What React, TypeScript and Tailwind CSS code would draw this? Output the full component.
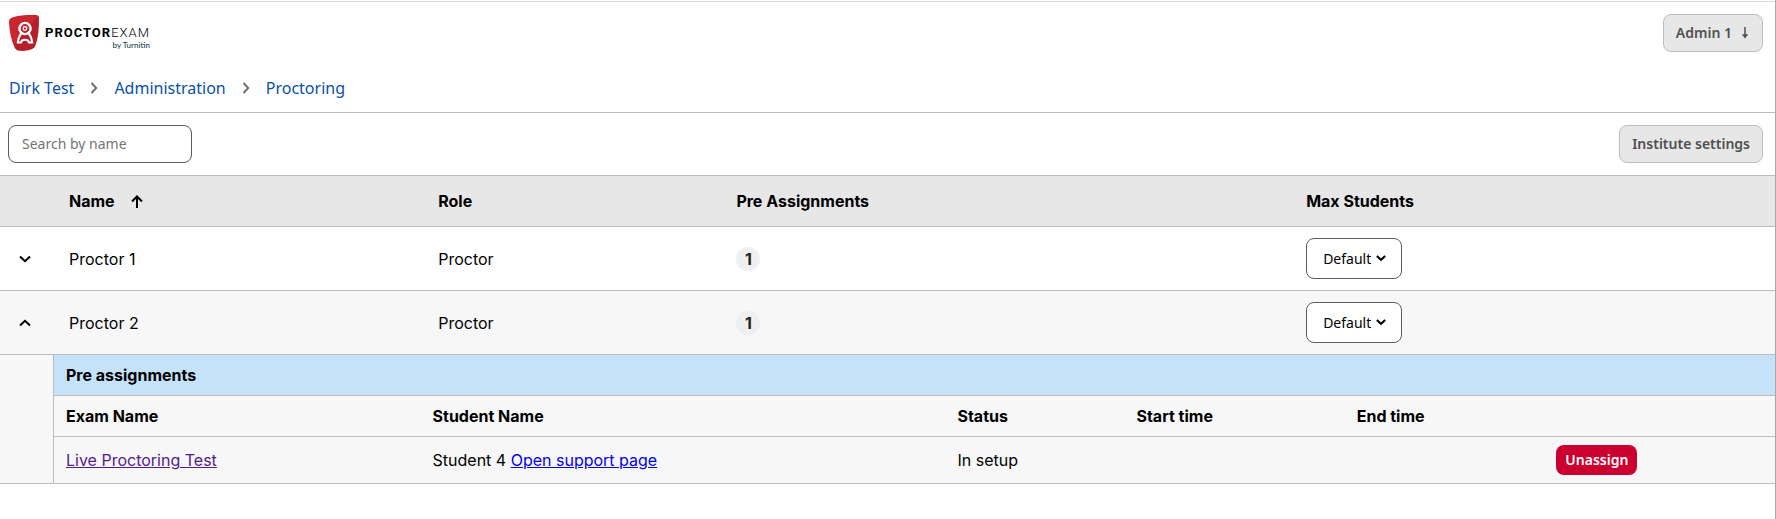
import clsx from "clsx";

type ChevronProps = {
  className?: string;
};

type Proctor = {
  name: string;
  role: string;
  preAssignments: number;
  expanded: boolean;
};

const breadcrumbs = ["Dirk Test", "Administration", "Proctoring"];

const proctors: Proctor[] = [
  { name: "Proctor 1", role: "Proctor", preAssignments: 1, expanded: false },
  { name: "Proctor 2", role: "Proctor", preAssignments: 1, expanded: true },
];

function ChevronDown({ className }: ChevronProps) {
  return (
    <svg
      viewBox="0 0 12 8"
      fill="none"
      stroke="currentColor"
      strokeWidth="2"
      className={className}
      aria-hidden="true"
    >
      <path d="M1 1.5 6 6.2 11 1.5" />
    </svg>
  );
}

function Logo() {
  return (
    <a href="#" aria-label="ProctorExam by Turnitin" className="flex items-center gap-1.5">
      <svg viewBox="0 0 30 36" className="h-9 w-[30px]" aria-hidden="true">
        <defs>
          <linearGradient id="shield" x1="0" y1="0" x2="1" y2="1">
            <stop offset="0.5" stopColor="#ca2630" />
            <stop offset="0.5" stopColor="#b51f29" />
          </linearGradient>
        </defs>
        <path
          d="M4 2.2C11 .2 19-.4 27 .1c2 .1 3 1.2 3 3.2C30 13 29.5 21 27 29c-1 3-2 4.500-4.500 5.300-4 1.500-8 1.900-12 1.500-2.500-.3-4-1.300-5-3.600C2 25 .4 16 0 7c0-2.800 1.200-4 4-4.800Z"
          fill="url(#shield)"
        />
        <g fill="none" stroke="#fff">
          <circle cx="16" cy="13.5" r="5.6" strokeWidth="2.4" />
          <circle cx="16" cy="13.5" r="1.8" strokeWidth="1.3" />
          <path
            d="M12.2 18.500C10.500 20.500 9.300 24 8.800 27.500h3.200c.8-3.600 7.200-3.600 8 0h3.200c-.5-3.500-1.700-7-3.400-9"
            strokeWidth="2"
          />
        </g>
      </svg>
      <span className="flex flex-col items-end pt-3 leading-none text-black">
        <span className="font-['Roboto',sans-serif] text-[13px] leading-3 font-light tracking-[1px]">
          <b className="font-bold">PROCTOR</b>EXAM
        </span>
        <span className="font-['Lato',sans-serif] text-[8px] leading-3 font-medium text-[#17414d]">
          by Turnitin
        </span>
      </span>
    </a>
  );
}

function Header() {
  return (
    <header className="border-y border-t-[#d9d9d9] border-b-[#bdbdbd] py-3">
      <div className="flex items-center justify-between pr-3 pl-[9px]">
        <Logo />
        <button
          type="button"
          className="flex h-[38px] items-center gap-2 rounded-lg border border-[#bdbdbd] bg-[#e7e7e7] px-3 text-sm font-semibold text-[#505050]"
        >
          Admin 1
          <svg viewBox="1 0 10 12" className="h-3 w-[10px]" aria-hidden="true">
            <path d="M6 0v8" stroke="currentColor" strokeWidth="1.5" />
            <path d="M2.8 7.300h6.400L6 11.500Z" fill="currentColor" />
          </svg>
        </button>
      </div>
      <nav aria-label="Breadcrumb" className="mt-6 pl-[9px]">
        <ol className="flex gap-4">
          {breadcrumbs.map((crumb, i) => (
            <li key={crumb} className="flex items-center gap-4">
              {i > 0 && (
                <ChevronDown className="-mx-0.5 h-2 w-3 -rotate-90 text-[#707070]" />
              )}
              <a href="#" className="text-[#0b51a8]">
                {crumb}
              </a>
            </li>
          ))}
        </ol>
      </nav>
    </header>
  );
}

function Toolbar() {
  return (
    <div className="flex items-center justify-between border-b border-[#bdbdbd] py-3 pr-3 pl-2">
      <input
        type="search"
        aria-label="Search by name"
        placeholder="Search by name"
        className="h-[38px] w-[184px] rounded-lg border border-[#5c5c5c] bg-white px-[13px] pb-0.5 text-sm placeholder:text-[#757575]"
      />
      <button
        type="button"
        className="h-[38px] rounded-lg border border-[#bdbdbd] bg-[#e7e7e7] px-3 text-sm font-semibold text-[#505050]"
      >
        Institute settings
      </button>
    </div>
  );
}

function MaxStudentsSelect({ name }: { name: string }) {
  return (
    <div className="relative h-[41px] w-24">
      <select
        aria-label={`Max students for ${name}`}
        className="size-full appearance-none rounded-lg border border-[#5c5c5c] bg-white pl-4 font-['Noto_Sans',sans-serif] text-sm text-black"
      >
        <option>Default</option>
      </select>
      <ChevronDown className="pointer-events-none absolute top-4 right-4 h-2 w-[10px] stroke-[2.5]" />
    </div>
  );
}

function ProctorRow({ name, role, preAssignments, expanded }: Proctor) {
  return (
    <tr
      className={clsx(
        "h-16 [&>td]:border-b [&>td]:border-[#bdbdbd]",
        expanded && "bg-[#f7f7f7]"
      )}
    >
      <td>
        <button
          type="button"
          aria-label={`Toggle pre assignments of ${name}`}
          aria-expanded={expanded}
          className="flex w-full justify-center pr-1"
        >
          <ChevronDown className={clsx("h-2 w-3", expanded && "rotate-180")} />
        </button>
      </td>
      <td className="px-4">{name}</td>
      <td className="px-4">{role}</td>
      <td className="px-4">
        <span className="flex size-6 items-center justify-center rounded-full bg-[#efefef] font-bold text-[#222]">
          {preAssignments}
        </span>
      </td>
      <td className="px-4">
        <MaxStudentsSelect name={name} />
      </td>
    </tr>
  );
}

function PreAssignments() {
  return (
    <table className="w-full table-fixed border-separate border-spacing-0 text-left">
      <caption className="h-[41px] border-b border-[#bdbdbd] bg-[#c6e2f8] px-3 text-left leading-10 font-bold">
        Pre assignments
      </caption>
      <thead>
        <tr className="h-[41px] [&>*]:border-b [&>*]:border-[#bdbdbd]">
          <th className="w-[21.3%] px-3">Exam Name</th>
          <th className="w-[30.5%] px-3">Student Name</th>
          <th className="w-[10.4%] px-3">Status</th>
          <th className="w-[12.8%] px-3">Start time</th>
          <th className="w-[11.6%] px-3">End time</th>
          <td className="px-3" />
        </tr>
      </thead>
      <tbody>
        <tr className="h-[46px]">
          <td className="px-3">
            <a href="#" className="text-[#551a8b] underline">
              Live Proctoring Test
            </a>
          </td>
          <td className="px-3">
            Student 4{" "}
            <a href="#" className="text-[#0000ee] underline">
              Open support page
            </a>
          </td>
          <td className="px-3">In setup</td>
          <td className="px-3" />
          <td className="px-3" />
          <td className="px-3">
            <button
              type="button"
              className="block h-[30px] rounded-lg bg-[#cb0030] px-[9px] font-['Noto_Sans',sans-serif] text-sm font-semibold text-white"
            >
              Unassign
            </button>
          </td>
        </tr>
      </tbody>
    </table>
  );
}

function ProctorTable() {
  return (
    <table className="w-full table-fixed border-separate border-spacing-0 text-left font-['Inter',sans-serif] text-black">
      <thead>
        <tr className="h-[51px] bg-[#e7e7e7] [&>*]:border-b [&>*]:border-[#bdbdbd]">
          <td className="w-[53px]" />
          <th className="w-[20.8%] px-4" aria-sort="ascending">
            <button type="button" className="flex items-center gap-4 font-bold">
              Name
              <svg
                viewBox="0 0 12 13"
                fill="none"
                stroke="currentColor"
                strokeWidth="2"
                className="h-[13px] w-3"
                aria-hidden="true"
              >
                <path d="M6 13V2M1 6.5l5-5 5 5" />
              </svg>
            </button>
          </th>
          <th className="w-[16.8%] px-4">Role</th>
          <th className="w-[32.1%] px-4">Pre Assignments</th>
          <th className="px-4">Max Students</th>
        </tr>
      </thead>
      <tbody>
        {proctors.map((proctor) => (
          <ProctorRow key={proctor.name} {...proctor} />
        ))}
        <tr className="bg-[#f7f7f7] [&>td]:border-b [&>td]:border-[#bdbdbd]">
          <td />
          <td colSpan={4} className="border-l p-0">
            <PreAssignments />
          </td>
        </tr>
      </tbody>
    </table>
  );
}

export default function App() {
  return (
    <div className="min-h-screen border-r border-[#a8a8a8] bg-white pt-px font-['Noto_Sans',sans-serif] text-base">
      <Header />
      <main>
        <Toolbar />
        <ProctorTable />
      </main>
    </div>
  );
}
